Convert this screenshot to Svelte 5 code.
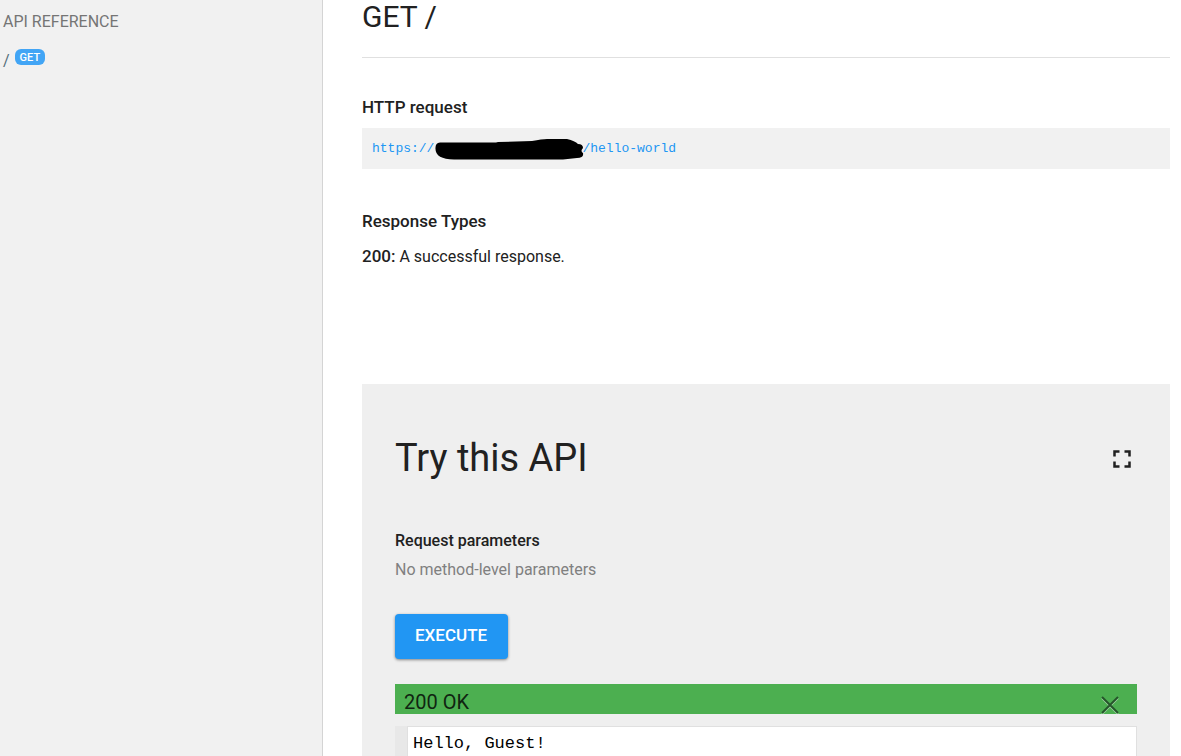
<script>
  let responseOpen = $state(true);
  let expanded = $state(false);
</script>

<div class="shell">
  <nav class="sidebar" aria-label="API reference">
    <h2 class="nav-title">API REFERENCE</h2>
    <a class="nav-item" href="#method">
      <span class="nav-path">/</span>
      <span class="badge">GET</span>
    </a>
  </nav>

  <main class="content" id="method">
    <h1>GET /</h1>

    <section class="request">
      <h3>HTTP request</h3>
      <code class="url">
        <span>https://</span>
        <svg class="host" viewBox="0 0 148 24" aria-hidden="true">
          <path d="M6 5.500 H62 L64 5 L98 4 Q108 2 113 2 L133 2 Q141 4 144 7 Q149 7 149 11 Q146 14 149 16 Q150 21 143 21 L129 22.500 L62 22.500 L20 22.500 Q1.500 22 1.500 12 Q1 6 6 5.500Z" />
        </svg>
        <span>/hello-world</span>
      </code>
    </section>

    <section class="types">
      <h3>Response Types</h3>
      <p><strong>200:</strong> A successful response.</p>
    </section>

    <section class="try" class:expanded>
      <header class="try-head">
        <h2>Try this API</h2>
        <button class="icon-button" aria-label="Toggle full screen" onclick={() => (expanded = !expanded)}>
          <svg width="30" height="30" viewBox="0 0 24 24" aria-hidden="true">
            <path d="M7 14H5v5h5v-2H7v-3zm-2-4h2V7h3V5H5v5zm12 7h-3v2h5v-5h-2v3zM14 5v2h3v3h2V5h-5z" />
          </svg>
        </button>
      </header>

      <h4>Request parameters</h4>
      <p class="muted">No method-level parameters</p>

      <button class="execute" onclick={() => (responseOpen = true)}>EXECUTE</button>

      {#if responseOpen}
        <div class="status">
          <span>200 OK</span>
          <button class="close" aria-label="Close response" onclick={() => (responseOpen = false)}>
            <svg width="18" height="18" viewBox="0 0 18 18" aria-hidden="true">
              <path class="glow" d="M1 2l16 16M17 2L1 18" />
              <path class="cross" d="M1 1l16 16M17 1L1 17" />
            </svg>
          </button>
        </div>
        <div class="output">
          <pre>Hello, Guest!</pre>
        </div>
      {/if}
    </section>
  </main>
</div>

<style>
  .shell {
    display: grid;
    grid-template-columns: 323px minmax(0, 1fr);
    height: 100vh;
    overflow: hidden;
    background: #fff;
    color: #212121;
    font: 16px/24px Roboto, sans-serif;
  }

  h1, h2, h3, h4, p, pre {
    margin: 0;
  }

  button {
    border: 0;
    font-family: inherit;
    cursor: pointer;
  }

  .sidebar {
    box-sizing: border-box;
    padding: 10px 3px;
    border-right: 1px solid #d4d4d4;
    background: #f1f1f1;
  }

  .nav-title {
    color: #757575;
    font-size: 16px;
    font-weight: 400;
    line-height: 24px;
  }

  .nav-item {
    display: flex;
    align-items: flex-start;
    gap: 5px;
    margin-top: 15px;
    color: #546e7a;
    line-height: 24px;
    text-decoration: none;
  }

  .badge {
    padding: 1px 5px 0;
    border-radius: 6px;
    background: #42a5f5;
    color: #fff;
    font-size: 11px;
    font-weight: 500;
    line-height: 15px;
  }

  .content {
    padding: 0 11px 0 39px;
  }

  h1 {
    padding-bottom: 24px;
    border-bottom: 1px solid #e0e0e0;
    font-size: 30px;
    font-weight: 400;
    line-height: 33px;
  }

  h3 {
    font-size: 17px;
    font-weight: 500;
    line-height: 24px;
  }

  .request {
    margin-top: 37px;
  }

  .url {
    display: flex;
    align-items: center;
    height: 41px;
    margin-top: 9px;
    padding: 0 10px;
    background: #f1f1f1;
    color: #2196f3;
    font: 13px/20px "Liberation Mono", monospace;
  }

  .host {
    flex: none;
    width: 148px;
    height: 24px;
    overflow: visible;
  }

  .types {
    margin-top: 40px;
  }

  .types p {
    margin-top: 11px;
  }

  .types strong {
    font-size: 17px;
    font-weight: 500;
  }

  .try {
    margin-top: 115px;
    padding: 48px 33px;
    background: #efefef;
  }

  .try.expanded {
    position: fixed;
    inset: 0;
    margin: 0;
  }

  .try-head {
    display: flex;
    align-items: center;
    justify-content: space-between;
  }

  h2 {
    font-size: 38px;
    font-weight: 400;
    line-height: 53px;
  }

  .icon-button {
    display: flex;
    padding: 0;
    background: none;
    fill: #212121;
  }

  h4 {
    margin-top: 44px;
    font-size: 16px;
    font-weight: 500;
    line-height: 24px;
  }

  .muted {
    margin-top: 5px;
    color: #808080;
  }

  .execute {
    display: block;
    height: 45px;
    margin-top: 32px;
    padding: 0 21px 3px 20px;
    border-radius: 4px;
    background: #2196f3;
    box-shadow: 0 1px 3px rgba(0, 0, 0, 0.45);
    color: #fff;
    font-size: 17px;
    font-weight: 500;
  }

  .status {
    display: flex;
    align-items: flex-end;
    justify-content: space-between;
    height: 30px;
    margin-top: 25px;
    padding: 0 18px 0 9px;
    background: #4caf50;
    color: #102511;
    font-size: 20px;
  }

  .close {
    display: flex;
    padding: 0;
    background: none;
  }

  .close path {
    fill: none;
    stroke-width: 2;
  }

  .glow {
    stroke: #a5d6a7;
  }

  .cross {
    stroke: #25552a;
  }

  .output {
    min-height: 160px;
    margin-top: 12px;
    padding-left: 12px;
    background: #e8e8e8;
  }

  pre {
    box-sizing: border-box;
    min-height: 160px;
    padding: 5px;
    border: 1px solid #e0e0e0;
    background: #fff;
    color: #000;
    font: 17px/24px "Liberation Mono", monospace;
  }
</style>
